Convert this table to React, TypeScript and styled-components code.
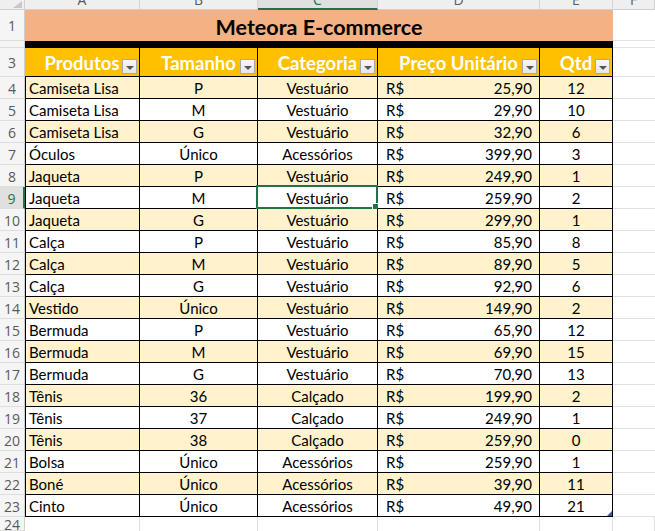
import React from "react";
import styled, { createGlobalStyle, css } from "styled-components";

const GlobalStyle = createGlobalStyle`
  html, body { margin: 0; padding: 0; background: #ffffff; overflow: hidden; }
  * { box-sizing: border-box; }
`;

const GRID = "#e1e1e1";
const GREEN = "#217346";

const Sheet = styled.div`
  display: grid;
  width: 655px;
  height: 531px;
  overflow: hidden;
  grid-template-columns: 25px 115px 118px 120px 162px 73px 1fr;
  grid-template-rows: 10px 31px 7px 29px repeat(20, 22px) 1fr;
  font-family: Lato, "Noto Sans", sans-serif;
  background: #fff;
`;

const Corner = styled.div`
  position: relative;
  background: #efefef;
  border-right: 1px solid #cfcfcf;
  border-bottom: 1px solid #cfcfcf;
  &::after {
    content: "";
    position: absolute;
    right: 2px;
    bottom: 1px;
    width: 0;
    height: 0;
    border-left: 9px solid transparent;
    border-bottom: 7px solid #c8c8c8;
  }
`;

const ColHead = styled.div<{ $selected?: boolean }>`
  background: ${(p) => (p.$selected ? "#e0e0e0" : "#efefef")};
  border-right: 1px solid #d4d4d4;
  border-bottom: ${(p) => (p.$selected ? `2px solid ${GREEN}` : "1px solid #cfcfcf")};
  overflow: hidden;
  display: flex;
  justify-content: center;
  font-family: "Open Sans", "Noto Sans", sans-serif;
  font-size: 14px;
  color: ${(p) => (p.$selected ? GREEN : "#5a5a5a")};
  span {
    display: block;
    line-height: 14px;
    margin-top: -7px;
  }
`;

const RowHead = styled.div<{ $selected?: boolean }>`
  background: ${(p) => (p.$selected ? "#e0e0e0" : "#f5f5f5")};
  border-right: ${(p) => (p.$selected ? `2px solid ${GREEN}` : "1px solid #cfcfcf")};
  border-bottom: 1px solid #dedede;
  display: flex;
  align-items: center;
  justify-content: center;
  font-family: "Open Sans", "Noto Sans", sans-serif;
  font-size: 14px;
  color: ${(p) => (p.$selected ? GREEN : "#5a5a5a")};
  overflow: hidden;
  padding-top: 1px;
`;

const TitleCell = styled.div`
  grid-column: span 5;
  background: #f4b183;
  display: flex;
  align-items: center;
  justify-content: center;
  font-weight: 700;
  font-size: 21.5px;
  color: #000;
  padding-top: 2px;
`;

const BlackBar = styled.div`
  grid-column: span 5;
  background: #000;
`;

const EmptyCell = styled.div<{ $right?: boolean }>`
  border-bottom: 1px solid ${GRID};
  ${(p) =>
    p.$right &&
    css`
      border-right: 1px solid ${GRID};
      border-bottom: none;
    `}
`;

const HeaderCell = styled.div`
  position: relative;
  background: #ffc000;
  color: #fff;
  font-weight: 700;
  font-size: 18.5px;
  display: flex;
  align-items: center;
  justify-content: center;
  border-right: 1px solid #000;
  border-bottom: 1px solid #000;
  padding-top: 1px;
  white-space: nowrap;
`;

const FilterButton = styled.div`
  position: absolute;
  right: 2px;
  bottom: 2px;
  width: 15px;
  height: 15px;
  background: linear-gradient(#f7f7f7, #e6e6e6);
  border: 1px solid #a9a9a9;
  display: flex;
  align-items: center;
  justify-content: center;
  &::after {
    content: "";
    margin-top: 2px;
    width: 0;
    height: 0;
    border-left: 4px solid transparent;
    border-right: 4px solid transparent;
    border-top: 4px solid #555;
  }
`;

type Align = "left" | "center" | "money";

const DataCell = styled.div<{ $zebra: boolean; $align: Align; $first?: boolean }>`
  position: relative;
  background: ${(p) => (p.$zebra ? "#fff2cc" : "#ffffff")};
  border-right: 1px solid #000;
  border-bottom: 1px solid #000;
  ${(p) => p.$first && "border-left: 1px solid #000;"}
  display: flex;
  align-items: center;
  font-size: 15px;
  color: #000;
  white-space: nowrap;
  padding-top: 1px;
  ${(p) =>
    p.$align === "left"
      ? css`
          justify-content: flex-start;
          padding-left: 3px;
        `
      : p.$align === "center"
      ? css`
          justify-content: center;
        `
      : css`
          justify-content: space-between;
          padding: 1px 7px 0 8px;
        `}
`;

const Selection = styled.div`
  position: absolute;
  top: -2px;
  left: -2px;
  right: -1px;
  bottom: -1px;
  border: 2px solid ${GREEN};
  pointer-events: none;
  &::after {
    content: "";
    position: absolute;
    right: -4px;
    bottom: -4px;
    width: 6px;
    height: 6px;
    background: ${GREEN};
    border: 1px solid #fff;
  }
`;

const TableHandle = styled.div`
  position: absolute;
  right: 0px;
  bottom: 0px;
  width: 0;
  height: 0;
  border-left: 5px solid transparent;
  border-bottom: 5px solid #3f51a8;
`;

type Row = [string, string, string, string, number];

const rows: Row[] = [
  ["Camiseta Lisa", "P", "Vestuário", "25,90", 12],
  ["Camiseta Lisa", "M", "Vestuário", "29,90", 10],
  ["Camiseta Lisa", "G", "Vestuário", "32,90", 6],
  ["Óculos", "Único", "Acessórios", "399,90", 3],
  ["Jaqueta", "P", "Vestuário", "249,90", 1],
  ["Jaqueta", "M", "Vestuário", "259,90", 2],
  ["Jaqueta", "G", "Vestuário", "299,90", 1],
  ["Calça", "P", "Vestuário", "85,90", 8],
  ["Calça", "M", "Vestuário", "89,90", 5],
  ["Calça", "G", "Vestuário", "92,90", 6],
  ["Vestido", "Único", "Vestuário", "149,90", 2],
  ["Bermuda", "P", "Vestuário", "65,90", 12],
  ["Bermuda", "M", "Vestuário", "69,90", 15],
  ["Bermuda", "G", "Vestuário", "70,90", 13],
  ["Tênis", "36", "Calçado", "199,90", 2],
  ["Tênis", "37", "Calçado", "249,90", 1],
  ["Tênis", "38", "Calçado", "259,90", 0],
  ["Bolsa", "Único", "Acessórios", "259,90", 1],
  ["Boné", "Único", "Acessórios", "39,90", 11],
  ["Cinto", "Único", "Acessórios", "49,90", 21],
];

const columns = ["A", "B", "C", "D", "E", "F"];
const headers = ["Produtos", "Tamanho", "Categoria", "Preço Unitário", "Qtd"];

export default function App() {
  return (
    <>
      <GlobalStyle />
      <Sheet>
        <Corner />
        {columns.map((c) => (
          <ColHead key={c} $selected={c === "C"}>
            <span>{c}</span>
          </ColHead>
        ))}

        <RowHead>1</RowHead>
        <TitleCell>Meteora E-commerce</TitleCell>
        <EmptyCell />

        <RowHead />
        <BlackBar />
        <EmptyCell />

        <RowHead>3</RowHead>
        {headers.map((h) => (
          <HeaderCell key={h}>
            {h}
            <FilterButton />
          </HeaderCell>
        ))}
        <EmptyCell />

        {rows.map((r, i) => {
          const rowNum = i + 4;
          const zebra = i % 2 === 0;
          const last = i === rows.length - 1;
          return (
            <React.Fragment key={rowNum}>
              <RowHead $selected={rowNum === 9}>{rowNum}</RowHead>
              <DataCell $zebra={zebra} $align="left" $first>
                {r[0]}
              </DataCell>
              <DataCell $zebra={zebra} $align="center">
                {r[1]}
              </DataCell>
              <DataCell $zebra={zebra} $align="center">
                {r[2]}
                {rowNum === 9 && <Selection />}
              </DataCell>
              <DataCell $zebra={zebra} $align="money">
                <span>R$</span>
                <span>{r[3]}</span>
              </DataCell>
              <DataCell $zebra={zebra} $align="center">
                {r[4]}
                {last && <TableHandle />}
              </DataCell>
              <EmptyCell />
            </React.Fragment>
          );
        })}

        <RowHead>24</RowHead>
        <EmptyCell $right />
        <EmptyCell $right />
        <EmptyCell $right />
        <EmptyCell $right />
        <EmptyCell $right />
        <EmptyCell $right />
      </Sheet>
    </>
  );
}
